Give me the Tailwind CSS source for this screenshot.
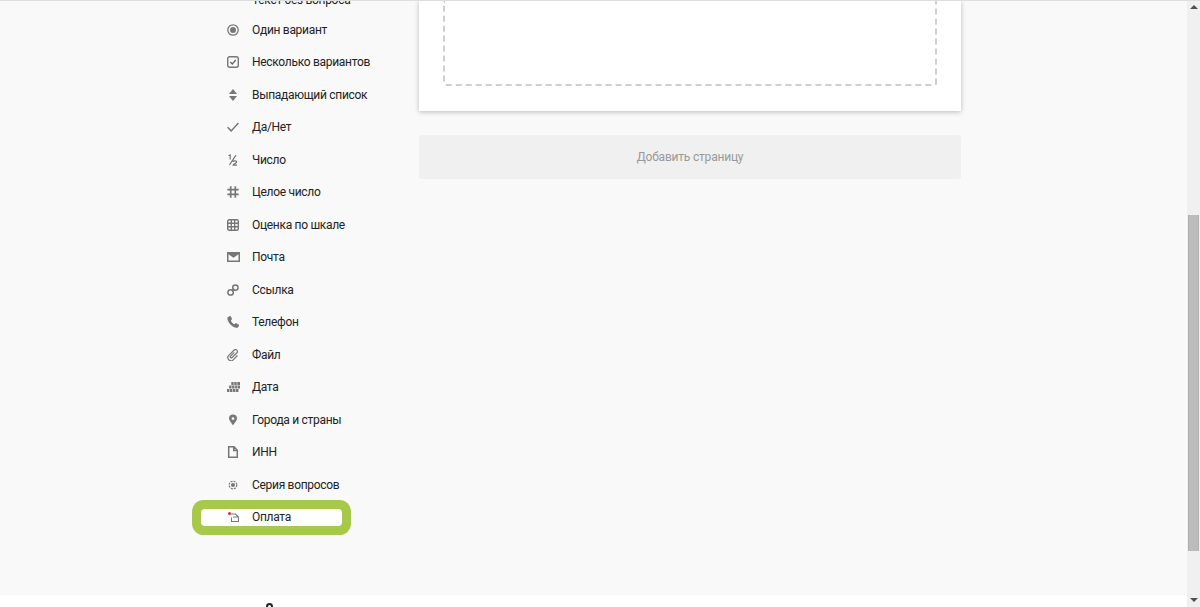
<!DOCTYPE html>
<html lang="ru">

<head>
    <meta charset="UTF-8" />
    <title>Форма</title>
    <script src="https://cdn.jsdelivr.net/npm/@tailwindcss/browser@4"></script>
</head>

<body class="h-[607px] overflow-hidden bg-white font-['Roboto','Noto_Sans',sans-serif] text-[12px] text-[#222]">

    <div class="flex h-[607px]">
        <div class="flex-1 flex flex-col min-w-0">
            <!-- Рабочая область -->
            <main class="h-[595px] bg-[#f9f9f9] border-t border-[#dedede] flex overflow-hidden">

                <!-- Список типов вопросов -->
                <aside class="w-[419px] shrink-0 pl-[201px] -mt-[20px]">
                    <ul class="flex flex-col w-[141px] whitespace-nowrap text-[12px] leading-[16px] tracking-[-0.3px]">
                        <li class="h-[32.5px] flex items-center gap-[13px] pl-[26px] pt-[5px]">
                            <span class="w-3 h-3 shrink-0"></span>
                            Текст без вопроса
                        </li>
                        <li class="h-[32.5px] flex items-center gap-[13px] pl-[26px]">
                            <svg class="w-3 h-3 shrink-0" viewBox="0 0 12 12" fill="none"><circle cx="6" cy="6" r="5.200" stroke="#777" stroke-width="1.300"/><circle cx="6" cy="6" r="3" fill="#777"/></svg>
                            Один вариант
                        </li>
                        <li class="h-[32.5px] flex items-center gap-[13px] pl-[26px]">
                            <svg class="w-3 h-3 shrink-0" viewBox="0 0 12 12" fill="none"><rect x=".7" y=".7" width="10.600" height="10.600" rx="2" stroke="#777" stroke-width="1.400"/><path d="M3.300 6l2 2 3.400-4" stroke="#666" stroke-width="1.300"/></svg>
                            Несколько вариантов
                        </li>
                        <li class="h-[32.5px] flex items-center gap-[13px] pl-[26px]">
                            <svg class="w-3 h-3 shrink-0" viewBox="0 0 12 12" fill="#777"><path d="M6 0l4 5H2zM6 12L2 7h8z"/></svg>
                            Выпадающий список
                        </li>
                        <li class="h-[32.5px] flex items-center gap-[13px] pl-[26px]">
                            <svg class="w-3 h-3 shrink-0" viewBox="0 0 12 12" fill="none"><path d="M.6 6.300l3.600 3.600 7.200-7.800" stroke="#777" stroke-width="1.500"/></svg>
                            Да/Нет
                        </li>
                        <li class="h-[32.5px] flex items-center gap-[13px] pl-[26px]">
                            <svg class="w-3 h-3 shrink-0" viewBox="0 0 12 12" fill="none" stroke="#777" stroke-width="1.200"><path d="M1.500 1.800L3.200 1v4.400M9 1.200L2.500 10.800M6 7.800c.4-1.300 3.700-1.300 3.700.3 0 1.200-3.200 1.700-3.600 3h3.900"/></svg>
                            Число
                        </li>
                        <li class="h-[32.5px] flex items-center gap-[13px] pl-[26px]">
                            <svg class="w-3 h-3 shrink-0" viewBox="0 0 12 12" fill="none" stroke="#777" stroke-width="1.700"><path d="M3.700.3v11.400M8.300.3v11.400M.3 3.700h11.400M.3 8.300h11.400"/></svg>
                            Целое число
                        </li>
                        <li class="h-[32.5px] flex items-center gap-[13px] pl-[26px]">
                            <svg class="w-3 h-3 shrink-0" viewBox="0 0 12 12" fill="none" stroke="#777" stroke-width="1.400"><rect x=".7" y=".7" width="10.600" height="10.600" rx="1.500"/><path d="M4.300.7v10.600M7.700.7v10.600M.7 4.300h10.600M.7 7.700h10.600"/></svg>
                            Оценка по шкале
                        </li>
                        <li class="h-[32.5px] flex items-center gap-[12px] pl-[26px]">
                            <svg class="w-[13px] h-[10px] shrink-0" viewBox="0 0 13 10" fill="#777"><path fill-rule="evenodd" d="M0 0h13v10H0zM1.500 2.200v6.300h10V2.200L6.500 5.800z"/></svg>
                            Почта
                        </li>
                        <li class="h-[32.5px] flex items-center gap-[13px] pl-[26px]">
                            <svg class="w-3 h-3 shrink-0" viewBox="0 0 12 12" fill="none" stroke="#777" stroke-width="1.500"><circle cx="3.600" cy="8.400" r="2.700"/><circle cx="8.400" cy="3.600" r="2.700"/><path d="M4.800 7.200l2.400-2.400"/></svg>
                            Ссылка
                        </li>
                        <li class="h-[32.5px] flex items-center gap-[13px] pl-[26px]">
                            <svg class="w-3 h-3 shrink-0" viewBox="0 0 12 12" fill="#777"><path d="M2.800 0L.4 1.400C-.2 5.800 5 11.900 10.200 12l1.800-2.100-.1-1.200-3-1.700-1.500 1.200C6 7.600 4.400 6 3.900 4.400l1.200-1.300L3.800.2z"/></svg>
                            Телефон
                        </li>
                        <li class="h-[32.5px] flex items-center gap-[13px] pl-[26px]">
                            <svg class="w-3 h-3 shrink-0" viewBox="0 0 12 12" fill="none" stroke="#777" stroke-width="1.200"><path d="M7.300 3.400L3.400 7.300a1.100 1.100 0 0 0 1.500 1.500L10 3.800a2 2 0 0 0-2.800-2.800L1.800 6.400a3.100 3.100 0 0 0 4.400 4.400l4.300-4.300"/></svg>
                            Файл
                        </li>
                        <li class="h-[32.5px] flex items-center gap-[13px] pl-[26px]">
                            <svg class="w-[13px] h-[10px] -mr-[1px] shrink-0" viewBox="0 0 13 10" fill="#777"><path d="M4.300 0h2.400v3H4.300zM7.300 0h2.400v3H7.300zM10.300 0H13v3h-2.700zM2.100 3.500h2.400v3H2.100zM5.100 3.500h2.400v3H5.100zM8.100 3.500h2.400v3H8.100zM11 3.500h2v3h-2zM0 7h2.400v3H0zM3 7h2.400v3H3zM6 7h2.400v3H6zM9 7h2.400v3H9z"/></svg>
                            Дата
                        </li>
                        <li class="h-[32.5px] flex items-center gap-[13px] pl-[26px]">
                            <svg class="w-3 h-3 shrink-0" viewBox="0 0 12 12" fill="#777"><path fill-rule="evenodd" d="M6 .5A4 4 0 0 0 2 4.500c0 2.600 3 4.600 4 7 1-2.400 4-4.400 4-7a4 4 0 0 0-4-4zm0 2.700a1.400 1.400 0 1 1 0 2.800 1.400 1.400 0 0 1 0-2.800z"/></svg>
                            Города и страны
                        </li>
                        <li class="h-[32.5px] flex items-center gap-[13px] pl-[26px]">
                            <svg class="w-3 h-3 shrink-0" viewBox="0 0 12 12" fill="none" stroke="#777" stroke-width="1.500"><path d="M1.700.8h5.300l3.300 3.400v7H1.700zM6.700.8v3.700h3.600"/></svg>
                            ИНН
                        </li>
                        <li class="h-[32.5px] flex items-center gap-[13px] pl-[26px]">
                            <svg class="w-3 h-3 shrink-0" viewBox="0 0 12 12" fill="none"><circle cx="6" cy="6" r="3.800" stroke="#777" stroke-width="1.200" stroke-dasharray="2 1"/><circle cx="6" cy="6" r="2" fill="#777"/></svg>
                            Серия вопросов
                        </li>
                        <!-- выделенный пункт -->
                        <li class="h-[17px] my-[8px] pb-[1px] flex items-center gap-[13px] pl-[26px] bg-white rounded-[4px] ring-[9px] ring-[#a6c94a]">
                            <svg class="w-3 h-3 shrink-0" viewBox="0 0 12 12" fill="none"><path d="M4 3h4.500l3 3v4.500H4.500V6.500M6 6h5.500" stroke="#777" stroke-width="1.100"/><circle cx="2.500" cy="2.500" r="1.500" fill="#e8212b"/></svg>
                            Оплата
                        </li>
                    </ul>
                </aside>

                <!-- Страница формы -->
                <section class="w-[542px] shrink-0">
                    <div class="h-[109.5px] bg-white shadow-[0_1px_5px_rgba(0,0,0,0.25)] px-[24px]">
                        <div class="h-[85px] border-2 border-t-0 border-dashed border-[#cfcfcf] rounded-b-[3px]"></div>
                    </div>
                    <button class="mt-[24.5px] w-full h-[44px] rounded-[3px] bg-[#f0f0f0] text-[#999] text-[12px] tracking-[-0.2px]">Добавить страницу</button>
                </section>

            </main>

            <!-- Подвал -->
            <footer class="flex-1 bg-white overflow-hidden pl-[266px] pt-[8px]">
                <div class="w-[7px] h-[7px] rounded-full border-2 border-[#222]"></div>
            </footer>
        </div>

        <!-- Полоса прокрутки -->
        <div class="w-[13px] shrink-0 bg-[#f0f0f0] flex flex-col items-center border-t border-[#dedede]">
            <div class="w-0 h-0 mt-[4px] border-x-[4px] border-x-transparent border-b-[4px] border-b-[#505050]"></div>
            <div class="w-[11px] h-[336px] mt-[206px] bg-[#bcbcbc] border-x border-[#b0b0b0]"></div>
            <div class="w-0 h-0 mt-[47px] border-x-[4px] border-x-transparent border-t-[4px] border-t-[#505050]"></div>
        </div>
    </div>

</body>

</html>
